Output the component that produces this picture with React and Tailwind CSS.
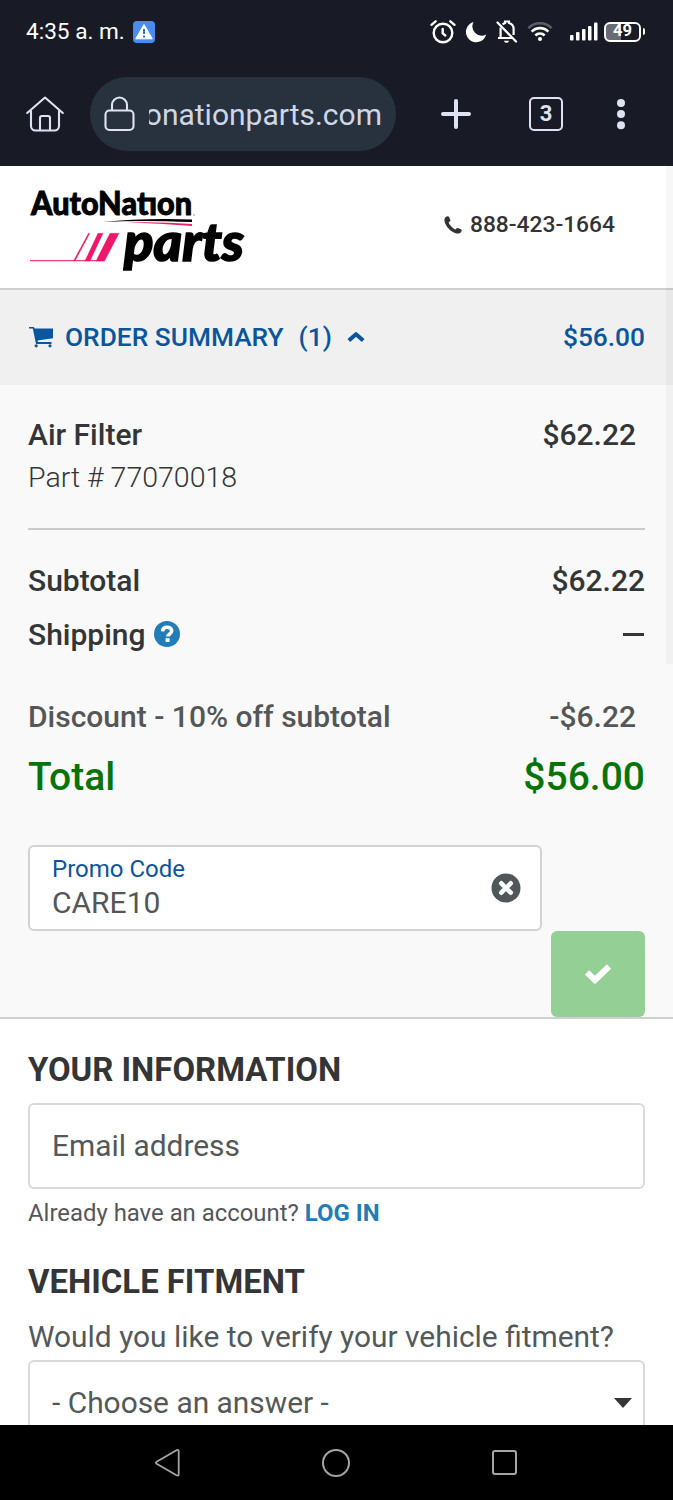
const AlarmIcon = () => (
  <svg width="26" height="26" viewBox="0 0 26 26" fill="none" stroke="#fff" strokeLinecap="round">
    <circle cx="13" cy="14" r="9.3" strokeWidth="2.4" />
    <path d="M12.7 10v4.3l2.6 2.2" strokeWidth="2.4" />
    <path d="M1.5 5.8 5.6 2.3M24.5 5.8 20.4 2.3" strokeWidth="2.4" />
  </svg>
);

const MoonIcon = () => (
  <svg width="22" height="22" viewBox="0 0 22 22" fill="#fff">
    <path d="M8.5 1A10.3 10.3 0 1 0 21.2 13.6 9.4 9.4 0 0 1 8.5 1Z" />
  </svg>
);

const BellOffIcon = () => (
  <svg width="22" height="24" viewBox="0 0 22 24" fill="none" stroke="#fff" strokeWidth="2.2">
    <path d="M1.5 2.500 20 21.500" strokeLinecap="round" />
    <path d="M4.600 7.500v10.300M2 18h14.500" />
    <path d="M6.500 4.200 9 3V1.500h4V3c2.800.8 4.600 3 4.600 6v6" />
    <path d="M8 20.800h5c-.4 1.500-1.200 2-2.500 2s-2.100-.5-2.500-2Z" fill="#fff" stroke="none" />
  </svg>
);

const WifiIcon = () => (
  <svg width="26" height="21" viewBox="0 0 28 22" fill="none" strokeWidth="2.800">
    <path d="M1.500 7.300a17.500 17.500 0 0 1 25 0" stroke="#5c5f68" />
    <path d="M5 11.200a12.500 12.500 0 0 1 18 0M9 15.300a7 7 0 0 1 10 0" stroke="#fff" />
    <circle cx="14" cy="19" r="2.200" fill="#fff" />
  </svg>
);

const SignalIcon = () => (
  <svg width="28" height="19" viewBox="0 0 28 19" fill="#fff">
    <rect x="0" y="13" width="3.500" height="5.500" rx="1" />
    <rect x="6" y="10" width="3.500" height="8.500" rx="1" />
    <rect x="12" y="7" width="3.500" height="11.500" rx="1" />
    <rect x="18" y="4" width="3.500" height="14.500" rx="1" />
    <rect x="24" y="0.500" width="3.500" height="18" rx="1" />
  </svg>
);

const Battery = () => (
  <div className="flex items-center gap-[2px]">
    <div className="flex h-5 w-[37px] items-center justify-center rounded-[6px] border-2 border-white bg-linear-to-r from-[#6a6c74] from-45% to-[#181b26] to-45% text-[16.500px] leading-none font-bold text-white">49</div>
    <div className="h-[7px] w-[2px] rounded-r bg-white" />
  </div>
);

const StatusBar = () => (
  <div className="flex h-16 items-center justify-between pr-7 pl-[26px] text-white">
    <div className="flex items-center gap-2">
      <span className="pt-px text-[22.600px] leading-none">4:35 a. m.</span>
      <svg width="22" height="22" viewBox="0 0 22 22">
        <rect width="22" height="22" rx="4" fill="#4a8df0" />
        <path d="M11 3.500 19.300 17.800H2.700Z" fill="#fff" stroke="#fff" strokeLinejoin="round" />
        <path d="M11 8v5M11 14.500v2" stroke="#3a6fc4" strokeWidth="2" />
      </svg>
    </div>
    <div className="flex items-center pb-px">
      <AlarmIcon />
      <div className="ml-[9px]"><MoonIcon /></div>
      <div className="ml-[9px]"><BellOffIcon /></div>
      <div className="ml-[9px]"><WifiIcon /></div>
      <div className="ml-[17px]"><SignalIcon /></div>
      <div className="ml-[6px]"><Battery /></div>
    </div>
  </div>
);

const BrowserBar = () => (
  <div className="flex h-[102px] items-center pb-[2px] pl-[26px] text-[#dfe2f2]">
    <svg className="shrink-0" width="38" height="36" viewBox="0 0 38 36" fill="none" stroke="currentColor" strokeWidth="2.100" strokeLinecap="round" strokeLinejoin="round">
      <path d="M1.200 17 19 1.500 36.800 17" />
      <path d="M5 15v15a4.500 4.500 0 0 0 4.500 4.500h19A4.500 4.500 0 0 0 33 30V15" />
      <path d="M14 34V22a2 2 0 0 1 2-2h6a2 2 0 0 1 2 2v12" />
    </svg>
    <div className="ml-[26px] flex h-[74px] w-[306px] shrink-0 items-center rounded-full bg-[#28323e] pl-[14px]">
      <svg className="shrink-0" width="31" height="36" viewBox="0 0 31 36" fill="none" stroke="currentColor" strokeWidth="2.100">
        <rect x="1.500" y="14.500" width="28" height="19.500" rx="4" />
        <path d="M8 14.500V9a7.500 7.500 0 0 1 15 0v5.500" />
      </svg>
      <div className="ml-[14px] flex h-10 w-[233px] items-center justify-end overflow-hidden pt-px text-[30px] leading-none whitespace-nowrap text-[#cfd6e6]">onationparts.com</div>
    </div>
    <svg className="ml-[45px] shrink-0" width="30" height="30" viewBox="0 0 30 30" stroke="currentColor" strokeWidth="4" strokeLinecap="round">
      <path d="M15 2v26M2 15h26" />
    </svg>
    <div className="ml-[58px] flex size-[34px] shrink-0 items-center justify-center rounded-[5px] border-2 border-current text-[22px] leading-none font-bold">3</div>
    <svg className="ml-[53px] shrink-0" width="10" height="32" viewBox="0 0 10 32" fill="currentColor">
      <circle cx="5" cy="5" r="4" />
      <circle cx="5" cy="16" r="4" />
      <circle cx="5" cy="27.300" r="4" />
    </svg>
  </div>
);

const Logo = () => (
  <svg width="226" height="96" viewBox="-1 -8 226 96">
    <text x="2" y="30.400" fontFamily="Lato" fontWeight="900" fontSize="31.500" textLength="161" lengthAdjust="spacingAndGlyphs" fill="#000" stroke="#000" strokeWidth=".9">AutoNatıon</text>
    <circle cx="165" cy="30" r=".7" fill="#777" />
    <path d="M74 37Q112 33 163 34.500v2.600Q112 34.800 74 37Z" fill="#000" />
    <path d="M98 37.500Q130 36.500 163 39v2Q130 38.300 98 37.500Z" fill="#e0246e" />
    <path d="M1 75.600h74" stroke="#e5407f" strokeWidth="1.200" />
    <path d="M44.500 76 59.500 48.300h1.300L46 76ZM56 76 69 48.300h5L61 76ZM67 76 81 48.300h9L75.500 76Z" fill="#ee1769" stroke="#ee1769" strokeWidth=".4" />
    <text x="95" y="76" fontFamily="Lato" fontStyle="italic" fontWeight="900" fontSize="53" textLength="120" lengthAdjust="spacingAndGlyphs" fill="#000" stroke="#000" strokeWidth="1.600">parts</text>
  </svg>
);

const SiteHeader = () => (
  <header className="flex h-[124px] items-center justify-between border-b-2 border-[#cfcfcf] bg-white pr-[58px] pb-1 pl-7">
    <Logo />
    <div className="flex items-center gap-2 text-[#333]">
      <svg width="18" height="18" viewBox="0 0 18 18" fill="currentColor">
        <path d="M1.500 1.200C3 0 4.600 0 5.200 1.200L6.300 3.800C6.600 4.800 6 5.600 4.600 6.400 5.500 8.900 8.800 12.200 11.300 13.400 12.200 12.200 13 11.700 14 12L16.900 13.300C18 14 18 15 17 16.200 15.800 17.600 13.500 18 11 17 6.500 15.200 2.600 11.200 1 7 .2 4.600.2 2.500 1.500 1.200Z" />
      </svg>
      <span className="text-[22.800px] leading-none font-medium">888-423-1664</span>
    </div>
  </header>
);

const SummaryBar = () => (
  <div className="flex h-[95px] items-center justify-between bg-[#f0f0f0] px-7 text-[26.300px] leading-none font-medium text-[#0b559f]">
    <div className="flex items-center">
      <svg width="26" height="22" viewBox="0 0 26 22" fill="currentColor">
        <path d="M1 .9h4.800l1 1.600H25v9.700L9.600 14.500l.3 1.500H23.500v1.900H8L4.800 2.400H1Z" />
        <circle cx="8.200" cy="19.800" r="1.600" />
        <circle cx="22" cy="19.800" r="1.600" />
      </svg>
      <span className="ml-[11px]">ORDER SUMMARY</span>
      <span className="ml-[15px]">(1)</span>
      <svg className="ml-[15px]" width="18" height="12" viewBox="0 0 18 12" fill="none" stroke="currentColor" strokeWidth="4" strokeLinejoin="round">
        <path d="M1.800 9.500 9 3.200l7.200 6.300" />
      </svg>
    </div>
    <span>$56.00</span>
  </div>
);

const Row = ({ label, value, className }) => (
  <div className={`flex items-center justify-between whitespace-nowrap ${className}`}>
    <span>{label}</span>
    <span>{value}</span>
  </div>
);

const OrderDetails = () => (
  <section className="h-[634px] border-b-2 border-[#cfcfcf] bg-[#f9f9f9] px-7 pt-6 text-[30px] font-medium text-[#333537]">
    <Row label="Air Filter" value="$62.22" className="h-[50px] pr-[9px]" />
    <div className="-mt-px h-10 text-[28.500px] leading-10 font-light">Part # 77070018</div>
    <div className="mt-[30px] border-t-2 border-[#cacaca]" />
    <Row label="Subtotal" value="$62.22" className="mt-[23px] h-[54px]" />
    <div className="flex h-[54px] items-center justify-between">
      <div className="flex items-center gap-2">
        <span>Shipping</span>
        <svg width="26" height="26" viewBox="0 0 26 26">
          <circle cx="13" cy="13" r="13" fill="#217cb8" />
          <path d="M8.500 10.300c.2-2.800 2-4 4.600-4s4.600 1.300 4.600 3.600c0 3-4 3-4 5.700" fill="none" stroke="#fff" strokeWidth="3.600" />
          <rect x="11.600" y="17.200" width="4" height="3.800" fill="#fff" />
        </svg>
      </div>
      <span className="mr-px h-[3px] w-[21px] bg-[#333537]" />
    </div>
    <Row label="Discount - 10% off subtotal" value="-$6.22" className="mt-7 h-[54px] pr-[9px] text-[#555657]" />
    <Row label="Total" value="$56.00" className="mt-1 h-[60px] text-[39px] text-[#067406]" />
    <div className="mt-[38px] flex h-[86px] w-[514px] items-center justify-between rounded-md border-2 border-[#d2d2d2] bg-white pr-[19px] pl-[22px] font-normal">
      <div className="pb-[5px] text-[#555657]">
        <div className="text-[24px] leading-[34px] text-[#0b559f]">Promo Code</div>
        <div className="leading-[34px]">CARE10</div>
      </div>
      <svg width="30" height="30" viewBox="0 0 30 30">
        <circle cx="15" cy="15" r="14.500" fill="#4f5759" />
        <path d="M10.300 10.300 19.700 19.700M19.700 10.300 10.300 19.700" stroke="#fff" strokeWidth="4.600" strokeLinecap="round" />
      </svg>
    </div>
    <div className="ml-auto flex h-[86px] w-[94px] items-center justify-center rounded-md bg-[#94d095]">
      <svg width="28" height="22" viewBox="0 0 28 22" fill="none" stroke="#fff" strokeWidth="6">
        <path d="M3 9.500 11 17 25 3.500" strokeLinejoin="miter" />
      </svg>
    </div>
  </section>
);

const InfoForm = () => (
  <section className="h-[406px] overflow-hidden bg-white px-7 text-[29.900px] whitespace-nowrap text-[#53585a]">
    <h2 className="mt-[31px] h-10 text-[32.900px] leading-10 font-bold text-[#333537]">YOUR INFORMATION</h2>
    <div className="mt-[13px] flex h-[86px] items-center rounded-md border-2 border-[#dadada] pt-px pl-[22px]">Email address</div>
    <p className="mt-[8px] text-[23.900px] leading-8">
      Already have an account? <span className="font-bold text-[#217cb8]">LOG IN</span>
    </p>
    <h2 className="mt-[33px] h-10 text-[32.900px] leading-10 font-bold text-[#333537]">VEHICLE FITMENT</h2>
    <p className="mt-[15px] leading-10">Would you like to verify your vehicle fitment?</p>
    <div className="mt-[3px] flex h-[86px] items-center justify-between rounded-md border-2 border-[#dadada] pr-[11px] pl-[22px]">
      <span>- Choose an answer -</span>
      <svg width="18" height="10" viewBox="0 0 18 10" fill="#333537">
        <path d="M0 0h18L9 10Z" />
      </svg>
    </div>
  </section>
);

const NavBar = () => (
  <div className="flex h-[75px] items-center bg-black pl-[154px] text-[#a5a5a5]">
    <svg width="28" height="30" viewBox="0 0 28 30" fill="none" stroke="currentColor" strokeWidth="1.800" strokeLinejoin="round">
      <path d="M2.600 13.700 22.500 2.200Q24.700 1.200 24.700 3.500v22.500Q24.700 28.300 22.500 27.200L2.600 15.700Q1.200 14.700 2.600 13.700Z" />
    </svg>
    <div className="ml-[140px] size-7 rounded-full border-2 border-current" />
    <div className="ml-[142px] size-[25px] rounded-[3px] border-2 border-current" />
  </div>
);

export default function App() {
  return (
    <div className="relative h-[1500px] w-[673px] overflow-hidden font-['Roboto',sans-serif]">
      <div className="bg-[#181b26]">
        <StatusBar />
        <BrowserBar />
      </div>
      <SiteHeader />
      <SummaryBar />
      <OrderDetails />
      <InfoForm />
      <NavBar />
      <div className="absolute top-[166px] right-0 h-[498px] w-[7px] bg-black/[0.03]" />
    </div>
  );
}
